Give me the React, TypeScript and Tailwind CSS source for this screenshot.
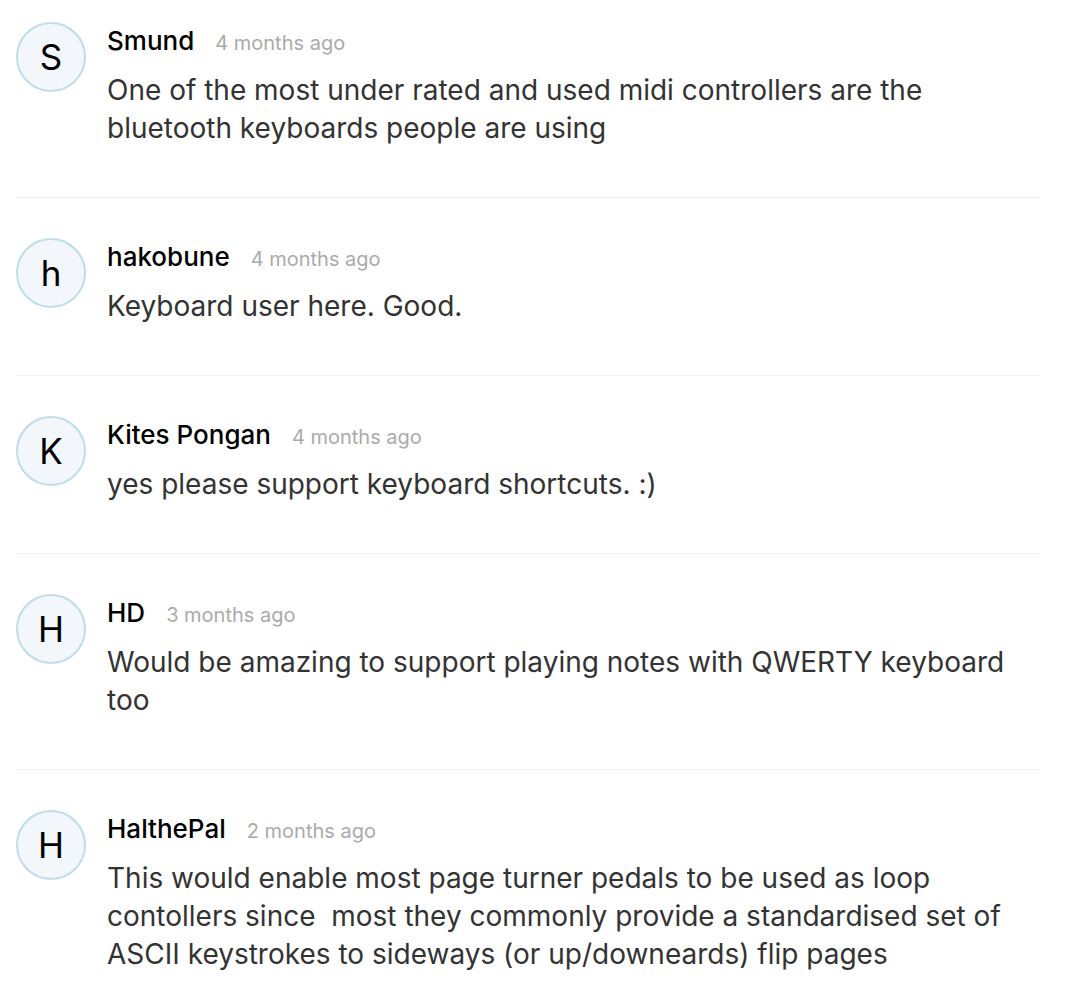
import React from "react";

const comments = [
  {
    initial: "S",
    name: "Smund",
    time: "4 months ago",
    text: "One of the most under rated and used midi controllers are the bluetooth keyboards people are using",
  },
  { initial: "h", name: "hakobune", time: "4 months ago", text: "Keyboard user here. Good." },
  { initial: "K", name: "Kites Pongan", time: "4 months ago", text: "yes please support keyboard shortcuts. :)" },
  {
    initial: "H",
    name: "HD",
    time: "3 months ago",
    text: "Would be amazing to support playing notes with QWERTY keyboard too",
  },
  {
    initial: "H",
    name: "HalthePal",
    time: "2 months ago",
    text: "This would enable most page turner pedals to be used as loop contollers since\u00a0 most they commonly provide a standardised set of ASCII keystrokes to sideways (or up/downeards) flip pages",
  },
];

export default function App() {
  return (
    <div className="min-h-screen bg-white" style={{ fontFamily: "Inter, 'Noto Sans', sans-serif" }}>
      <div className="w-[1024px] ml-4 pt-[22px]">
        {comments.map((c, i) => (
          <div
            key={i}
            className={`flex items-start gap-[21px] pb-[50px] ${i > 0 ? "border-t border-[#eef0f4] pt-[40px]" : ""}`}
          >
            <div className="w-[70px] h-[70px] shrink-0 rounded-full border-2 border-[#bfdde8] bg-[#f3f6fa] flex items-center justify-center text-[35px] text-black leading-none">
              {c.initial}
            </div>
            <div className="flex-1 min-w-0 mt-[3px]">
              <div className="flex items-baseline h-[32px]">
                <span className="text-[26px] leading-[32px] text-black font-medium">{c.name}</span>
                <span className="ml-[21px] text-[20px] leading-[32px] text-[#aaaaaa]">{c.time}</span>
              </div>
              <p className="mt-[14px] text-[28px] leading-[38px] text-[#333333]">{c.text}</p>
            </div>
          </div>
        ))}
      </div>
    </div>
  );
}
